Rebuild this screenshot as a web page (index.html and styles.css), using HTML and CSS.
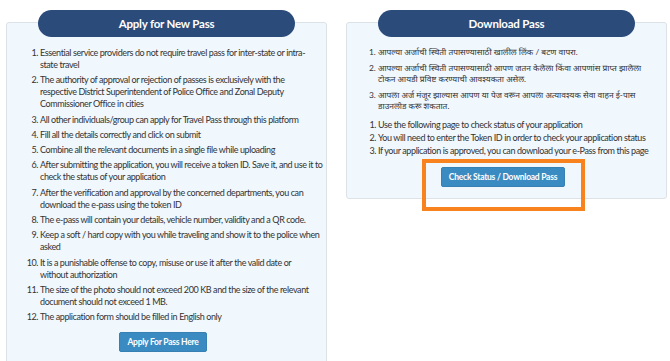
FILE: index.html
```html
<!DOCTYPE html>
<html lang="en">
<head>
    <meta charset="UTF-8">
    <meta name="viewport" content="width=device-width, initial-scale=1.0">
    <title>Travel Pass</title>
    <link rel="stylesheet" href="styles.css">
</head>
<body>
    <div class="page">
        <div class="card">
            <div class="card-title">Apply for New Pass</div>
            <div class="card-body">
                <ol class="rules">
                    <li>Essential service providers do not require travel pass for inter-state or intra-<br>state travel</li>
                    <li>The authority of approval or rejection of passes is exclusively with the<br>respective District Superintendent of Police Office and Zonal Deputy<br>Commissioner Office in cities</li>
                    <li>All other individuals/group can apply for Travel Pass through this platform</li>
                    <li>Fill all the details correctly and click on submit</li>
                    <li>Combine all the relevant documents in a single file while uploading</li>
                    <li>After submitting the application, you will receive a token ID. Save it, and use it to check the status of your application</li>
                    <li>After the verification and approval by the concerned departments, you can download the e-pass using the token ID</li>
                    <li>The e-pass will contain your details, vehicle number, validity and a QR code.</li>
                    <li>Keep a soft / hard copy with you while traveling and show it to the police when asked</li>
                    <li>It is a punishable offense to copy, misuse or use it after the valid date or without&nbsp;authorization</li>
                    <li>The size of the photo should not exceed 200 KB and the size of the relevant document should not exceed 1 MB.</li>
                    <li>The application form should be filled in English only</li>
                </ol>
                <div class="actions">
                    <button class="btn">Apply For Pass Here</button>
                </div>
            </div>
        </div>

        <div class="card">
            <div class="card-title">Download Pass</div>
            <div class="card-body card-body-short">
                <ol class="rules-mr" lang="mr">
                    <li>आपल्या अर्जाची स्थिती तपासण्यासाठी खालील लिंक / बटण वापरा.</li>
                    <li>आपल्या अर्जाची स्थिती तपासण्यासाठी आपण जतन केलेला किंवा आपणांस प्राप्त झालेला<br>टोकन आयडी प्रविष्ट करण्याची आवश्यकता असेल.</li>
                    <li>आपला अर्ज मंजूर झाल्यास आपण या पेज वरून आपला अत्यावश्यक सेवा वाहन ई-पास<br>डाउनलोड करू शकतात.</li>
                </ol>
                <ol class="steps">
                    <li>Use the following page to check status of your application</li>
                    <li>You will need to enter the Token ID in order to check your application status</li>
                    <li>If your application is approved, you can download your e-Pass from this page</li>
                </ol>
                <div class="actions actions-wide">
                    <span class="btn-mark">
                        <button class="btn">Check Status / Download Pass</button>
                        <span class="highlight"></span>
                    </span>
                </div>
            </div>
        </div>
    </div>
</body>
</html>
```

FILE: styles.css
```css
* {
    margin: 0;
    padding: 0;
    box-sizing: border-box;
}

body {
    font-family: 'Lato', 'Noto Sans Devanagari', 'Lohit Devanagari', 'FreeSans', sans-serif;
    background: #fff;
    color: #333;
}

.page {
    display: grid;
    grid-template-columns: 321px 321px;
    gap: 19px;
    padding: 10px 3px 0 6px;
}

.card-title {
    position: relative;
    z-index: 1;
    width: 80%;
    height: 27px;
    margin: 0 auto -15px;
    border-radius: 14px;
    background: #2b4b7b;
    color: #fff;
    font-size: 11.5px;
    font-weight: 700;
    letter-spacing: -0.2px;
    line-height: 27px;
    text-align: center;
}

.card-body {
    background: #f0f7fd;
    border: 1px solid #dde2e8;
    border-radius: 3px;
    padding: 24px 7px 30px 0;
}

.card-body-short {
    padding: 24px 7px 11px 0;
}

.rules,
.steps {
    font-size: 9px;
    letter-spacing: -0.4px;
}

.rules {
    margin-right: -5px;
    padding-left: 33px;
    line-height: 12px;
}

.rules li {
    margin-bottom: 3.3px;
}

.rules-mr {
    padding-left: 31px;
    font-size: 8.4px;
    line-height: 11.5px;
}

.rules-mr li {
    margin-bottom: 4px;
}

.steps {
    margin-top: 5px;
    padding-left: 31px;
    line-height: 13px;
}

.actions {
    display: flex;
    justify-content: center;
    margin-top: 9px;
}

.actions-wide {
    margin-top: 10px;
}

.btn {
    background: #3a8bc2;
    color: #fff;
    border: 1px solid #3680b3;
    border-radius: 2px;
    height: 20px;
    padding: 0 7px;
    font-family: inherit;
    font-size: 8.5px;
    font-weight: 700;
    letter-spacing: -0.25px;
    cursor: pointer;
}

.btn-mark {
    position: relative;
    display: inline-block;
}

.btn-mark .btn {
    display: block;
}

.highlight {
    position: absolute;
    left: -19px;
    right: -20px;
    top: -8px;
    bottom: -24px;
    border: 4px solid #f7821e;
    z-index: 2;
}
```
